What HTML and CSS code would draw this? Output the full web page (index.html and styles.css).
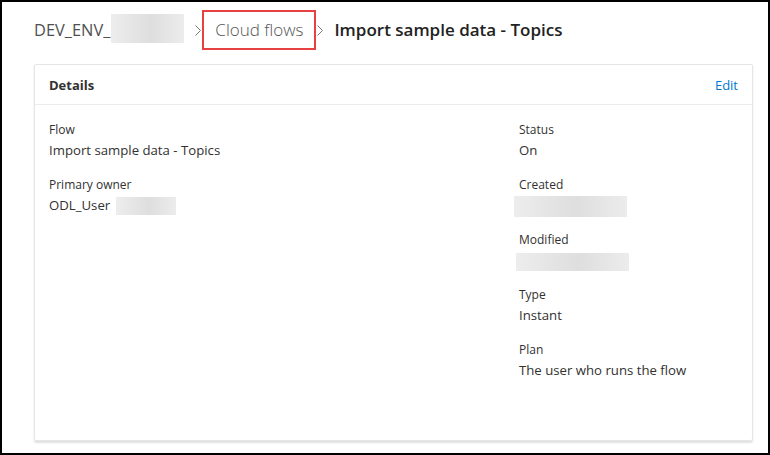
FILE: index.html
```html
<!DOCTYPE html>
<html>
<head>
<meta charset="utf-8">
<link rel="stylesheet" href="styles.css">
</head>
<body>
<div class="frame">
  <nav class="crumbs">
    <span class="crumb env">DEV_ENV_<span class="blur env-blur"></span></span>
    <svg class="chev chev-a" width="6" height="11" viewBox="0 0 6 11"><polyline points="0.5,0.5 5.5,5.5 0.5,10.5" fill="none" stroke="#777" stroke-width="1"/></svg>
    <span class="crumb flows">Cloud flows</span>
    <svg class="chev chev-b" width="6" height="11" viewBox="0 0 6 11"><polyline points="0.5,0.5 5.5,5.5 0.5,10.5" fill="none" stroke="#777" stroke-width="1"/></svg>
    <span class="crumb current">Import sample data - Topics</span>
  </nav>
  <section class="card">
    <header class="card-head">
      <h2>Details</h2>
      <a class="edit">Edit</a>
    </header>
    <div class="card-body">
      <div class="col left">
        <div class="field"><div class="label">Flow</div><div class="value">Import sample data - Topics</div></div>
        <div class="field"><div class="label">Primary owner</div><div class="value">ODL_User <span class="blur owner-blur"></span></div></div>
      </div>
      <div class="col right">
        <div class="field"><div class="label">Status</div><div class="value">On</div></div>
        <div class="field"><div class="label">Created</div><div class="value"><span class="blur date-blur created"></span></div></div>
        <div class="field"><div class="label">Modified</div><div class="value"><span class="blur date-blur modified"></span></div></div>
        <div class="field"><div class="label">Type</div><div class="value">Instant</div></div>
        <div class="field"><div class="label">Plan</div><div class="value">The user who runs the flow</div></div>
      </div>
    </div>
  </section>
</div>
</body>
</html>
```
FILE: styles.css
```css
html, body { margin: 0; padding: 0; background: #fff; }
body { font-family: "Open Sans", "Noto Sans", sans-serif; color: #323130; }
.frame {
  box-sizing: border-box;
  width: 770px;
  height: 455px;
  border: 2px solid #000;
  padding: 0 15px 0 32px;
  display: flex;
  flex-direction: column;
}
.crumbs {
  display: flex;
  align-items: center;
  height: 56px;
  font-size: 17px;
  white-space: nowrap;
}
.crumb { display: inline-flex; align-items: center; line-height: 24px; }
.env { color: #505050; font-weight: 400; font-size: 16.4px; }
.blur {
  display: inline-block;
  background: linear-gradient(90deg, #ededed 0%, #dedede 55%, #ececec 100%);
}
.env-blur { width: 73px; height: 29px; margin-left: 1px; margin-top: -3px; }
.chev { display: block; flex: none; }
.chev-a { margin: 1px 1px 0 11px; }
.chev-b { margin: 1px 11px 0 1px; }
.flows {
  color: #555;
  font-weight: 300;
  border: 2px solid #e84141;
  padding: 6px 11px 6px 11px;
}
.current { color: #222; font-weight: 600; }
.card {
  flex: 1;
  margin: 6px 0 12px 0;
  border: 1px solid #e6e6e6;
  border-radius: 2px;
  box-shadow: 0 1.5px 2px rgba(0,0,0,0.12);
  display: flex;
  flex-direction: column;
}
.card-head {
  display: flex;
  align-items: center;
  justify-content: space-between;
  height: 39px;
  padding: 0 14px 0 14px;
  border-bottom: 1px solid #ebebeb;
}
.card-head h2 { margin: 0; font-size: 13px; font-weight: 700; color: #323130; }
.edit { font-size: 13px; color: #0078d4; }
.card-body { display: flex; padding: 15px 14px 0 14px; }
.col.left { width: 470px; }
.col.right { flex: 1; }
.field { margin-bottom: 14px; }
.label { font-size: 12px; line-height: 20px; height: 20px; color: #323130; }
.value { font-size: 13.2px; line-height: 21px; height: 21px; color: #323130; display: flex; align-items: flex-start; }
.owner-blur { width: 60px; height: 18px; margin-left: 6px; margin-top: 2px; }
.date-blur { width: 113px; }
.created { margin-left: -5px; margin-top: 1px; height: 21px; }
.modified { margin-left: -3px; margin-top: 3px; height: 18px; }
```
